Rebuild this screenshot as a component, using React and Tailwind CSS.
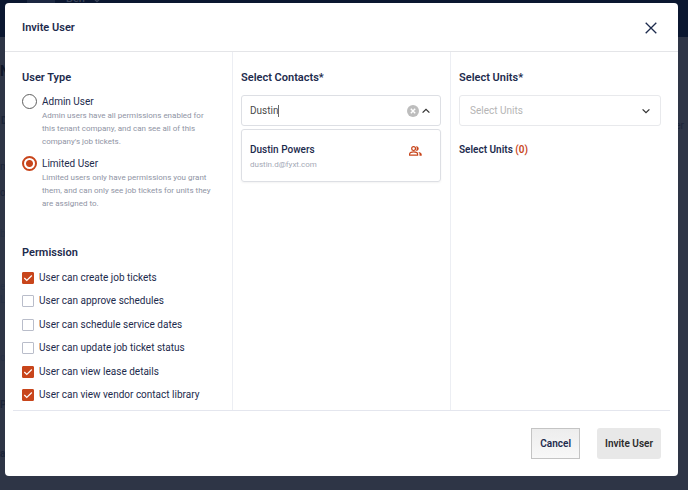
import { useState } from "react";

const userTypes = [
    {
        id: 'admin',
        label: 'Admin User',
        text: "Admin users have all permissions enabled for this tenant company, and can see all of this company's job tickets.",
    },
    {
        id: 'limited',
        label: 'Limited User',
        text: 'Limited users only have permissions you grant them, and can only see job tickets for units they are assigned to.',
    },
];

const permissionList = [
    { id: 'create', label: 'User can create job tickets' },
    { id: 'approve', label: 'User can approve schedules' },
    { id: 'schedule', label: 'User can schedule service dates' },
    { id: 'update', label: 'User can update job ticket status' },
    { id: 'lease', label: 'User can view lease details' },
    { id: 'vendor', label: 'User can view vendor contact library' },
];

// icons
const Chevron = ({ up, className }) => (
    <svg viewBox="0 0 8 8" className={className} fill="none" stroke="currentColor" strokeWidth="1.3">
        <path d={up ? "M.6 5.6 4 2.300l3.400 3.300" : "M.6 2.400 4 5.700l3.400-3.300"} />
    </svg>
);

const ContactIcon = () => (
    <svg viewBox="0 0 13 10" className="h-[10px] w-[13px]" fill="none" stroke="#c8451b" strokeWidth="1.2">
        <circle cx="4.6" cy="2.6" r="1.9" />
        <path d="M.6 9.2V8c0-1.500 2.200-2.200 4-2.200s4 .7 4 2.200v1.200z" />
        <path d="M7 .3c1.500-.2 2.700.8 2.700 2.300S8.500 5 7 4.900c.9-1.300.9-3.300 0-4.600zM9.300 6c1.800.3 3.400 1 3.400 2.300v1.400h-2.200V8.200c0-.9-.5-1.600-1.200-2.200z" fill="#c8451b" stroke="none" />
    </svg>
);

// dimmed page under the dialog
const PageBehind = () => (
    <div aria-hidden="true" className="h-screen overflow-hidden bg-[#2e3546] text-[10px] leading-3 text-[#1b2438]">
        <div className="flex h-[37px] items-start bg-[#0b1730] pl-[27px] text-[#3a445a]">
            <span className="h-[5px] w-7 bg-[#1c2841]" />
            <span className="-mt-[7px] ml-[11px] text-[11px] leading-3 font-medium">Ben</span>
            <Chevron className="-mt-1 ml-2 size-2" />
        </div>
        <p className="mt-7 text-sm leading-3 font-bold text-[#0f1729]">N</p>
        <div className="mt-[38px] flex items-start justify-between pr-1">
            <p className="pl-px font-bold">D</p>
            <p className="leading-[22px]">er</p>
        </div>
        <p className="mt-6">m</p>
        <p className="mt-[14px]">oc</p>
        <p className="mt-[29px] text-[#273044]">be</p>
        <p className="mt-[41px] text-[#273044]">e</p>
        <p className="mt-px text-[#273044]">Le</p>
        <p className="mt-[46px] text-[#273044]">os</p>
        <p className="mt-[35px] font-bold">Ph</p>
        <p className="mt-[37px] font-bold">ac</p>
    </div>
);

const InviteUserModal = () => {
    const [userType, setUserType] = useState('limited');
    const [permissions, setPermissions] = useState(['create', 'lease', 'vendor']);
    const [search, setSearch] = useState('Dustin');

    const togglePermission = (id) => {
        setPermissions(permissions.includes(id) ? permissions.filter((p) => p !== id) : [...permissions, id]);
    };

    return (
        <div role="dialog" aria-labelledby="invite-title" className="flex w-full flex-col rounded bg-white text-[#1d2b4d]">
            {/* Header */}
            <div className="flex h-[49px] items-center justify-between border-b border-[#e4e5e8] pt-[2px] pr-[21px] pl-[17px]">
                <h1 id="invite-title" className="text-[11px] font-semibold">Invite User</h1>
                <button aria-label="Close">
                    <svg viewBox="0 0 12 12" className="size-3" stroke="currentColor" strokeWidth="1.3">
                        <path d="M.7.7l10.600 10.600M11.300.7L.7 11.300" />
                    </svg>
                </button>
            </div>

            {/* Columns */}
            <div className="mx-2 grid grid-cols-[220fr_218fr_219fr] border-b border-[#e4e6ee]">
                <div className="border-r border-[#eceef3] pt-[17px] pr-2 pb-[7px] pl-[9px]">
                    <fieldset>
                        <legend className="text-[11px] leading-[18px] font-semibold">User Type</legend>
                        <div className="flex flex-col gap-2 pt-[7px]">
                            {userTypes.map((type) => (
                                <div key={type.id} className="flex items-start gap-[5px]">
                                    <input
                                        type="radio"
                                        name="user-type"
                                        id={type.id}
                                        checked={userType === type.id}
                                        onChange={() => setUserType(type.id)}
                                        className="size-[15px] shrink-0 appearance-none rounded-full border border-[#5f5f5f] checked:border-2 checked:border-[#c8451b] checked:bg-[radial-gradient(circle,#c8451b_3px,transparent_4px)]"
                                    />
                                    <div className="pr-2">
                                        <label htmlFor={type.id} className="block text-[10px] leading-[15px]">{type.label}</label>
                                        <p className="text-[8px] leading-[13px] text-[#8f94a4]">{type.text}</p>
                                    </div>
                                </div>
                            ))}
                        </div>
                    </fieldset>

                    <fieldset className="mt-[34px]">
                        <legend className="text-[11px] leading-[18px] font-semibold">Permission</legend>
                        <div className="mt-2 flex h-[133px] flex-col justify-between">
                            {permissionList.map((item) => (
                                <label key={item.id} className="flex items-center gap-[5px] text-[10px] leading-4">
                                    <span className="grid size-3 shrink-0">
                                        <input
                                            type="checkbox"
                                            checked={permissions.includes(item.id)}
                                            onChange={() => togglePermission(item.id)}
                                            className="peer col-start-1 row-start-1 size-3 appearance-none rounded-[1px] border border-[#b9bdca] checked:border-[#c8451b] checked:bg-[#c8451b]"
                                        />
                                        <svg viewBox="0 0 12 12" className="pointer-events-none invisible col-start-1 row-start-1 size-3 peer-checked:visible" fill="none" stroke="#fff" strokeWidth="1.2">
                                            <path d="M2.300 6l2.500 2.500 5-5" />
                                        </svg>
                                    </span>
                                    {item.label}
                                </label>
                            ))}
                        </div>
                    </fieldset>
                </div>

                <div className="border-r border-[#eceef3] pt-[17px] pr-[9px] pl-2">
                    <label htmlFor="contacts" className="block text-[11px] leading-[18px] font-semibold">Select Contacts*</label>
                    <div className="mt-2 flex h-[31px] items-center rounded-[3px] border border-[#dddfe4] pr-[10px] pl-2">
                        <label htmlFor="contacts" className="flex min-w-0 flex-1 cursor-text items-center">
                            <input
                                id="contacts"
                                value={search}
                                onChange={(e) => setSearch(e.target.value)}
                                className="field-sizing-content max-w-full text-[10px] text-[#4a4a4a] caret-transparent outline-none"
                            />
                            <span className="h-3 w-px bg-[#6b6b6b]" />
                        </label>
                        <button aria-label="Clear" onClick={() => setSearch('')}>
                            <svg viewBox="0 0 12 12" className="size-3" stroke="#fff" strokeWidth="1.4">
                                <circle cx="6" cy="6" r="6" fill="#bdbdbd" stroke="none" />
                                <path d="M3.800 3.800l4.400 4.400M8.200 3.800L3.800 8.200" />
                            </svg>
                        </button>
                        <Chevron up className="ml-[3px] size-2 text-[#333]" />
                    </div>
                    <button className="mt-[3px] flex w-full items-start justify-between rounded-[3px] border border-[#dddfe4] px-2 pt-3 pb-[9px] text-left shadow-xs">
                        <span>
                            <span className="block text-[10px] leading-4 font-medium">Dustin Powers</span>
                            <span className="block text-[8px] leading-[14px] text-[#a5a9b6]">dustin.d@fyxt.com</span>
                        </span>
                        <span className="mt-1 mr-[10px]"><ContactIcon /></span>
                    </button>
                </div>

                <div className="pt-[17px] pr-[9px] pl-2">
                    <label htmlFor="units" className="block text-[11px] leading-[18px] font-semibold">Select Units*</label>
                    <div className="relative mt-2">
                        <select id="units" className="h-[31px] w-full appearance-none rounded-[3px] border border-[#e8e9ec] pl-[10px] text-[10px] text-[#b5b5b5]">
                            <option>Select Units</option>
                        </select>
                        <Chevron className="pointer-events-none absolute top-3 right-[11px] size-2 text-[#333]" />
                    </div>
                    <p className="mt-4 text-[10px] leading-4 font-semibold">
                        Select Units <span className="text-[#c8451b]">(0)</span>
                    </p>
                </div>
            </div>

            {/* Bottom */}
            <div className="flex justify-end gap-[17px] p-[17px] text-[10px] font-semibold">
                <button className="h-[31px] border border-[#c4c4c4] bg-linear-to-b from-[#ededed] to-[#f8f8f8] px-2">Cancel</button>
                <button className="h-[31px] rounded-[3px] bg-[#e8e8e8] px-2 text-[#2b2b2b]">Invite User</button>
            </div>
        </div>
    );
};

const App = () => {
    return (
        <main className="relative min-h-screen overflow-hidden font-['Roboto',sans-serif]">
            <PageBehind />
            <div className="absolute inset-x-0 top-0 pt-[3px] pr-[10px] pl-[5px]">
                <InviteUserModal />
            </div>
        </main>
    );
};

export default App;
